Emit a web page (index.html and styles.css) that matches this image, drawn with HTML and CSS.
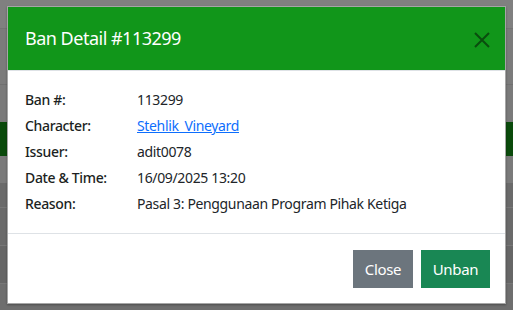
FILE: index.html
```html
<!DOCTYPE html>
<html lang="id">
<head>
<meta charset="utf-8">
<title>Ban Detail</title>
<link rel="stylesheet" href="styles.css">
</head>
<body>
<div class="page">
  <div class="bg bg-a"></div>
  <div class="bg bg-b"></div>
  <div class="bg bg-c"></div>
  <div class="bg bg-green"></div>
  <div class="bg bg-d"></div>
  <div class="bg bg-e"></div>
  <div class="bg bg-f"></div>
  <div class="bg bg-g"></div>
  <div class="bg bg-h"></div>
</div>
<div class="overlay">
  <div class="modal">
    <div class="modal-header">
      <h5 class="modal-title">Ban Detail #113299</h5>
      <button class="btn-close" type="button" aria-label="Close">
        <svg width="16" height="16" viewBox="0 0 16 16"><path d="M1 1L15 15M15 1L1 15" stroke="currentColor" stroke-width="2" fill="none"/></svg>
      </button>
    </div>
    <div class="modal-body">
      <div class="row"><span class="label">Ban #:</span><span class="value">113299</span></div>
      <div class="row"><span class="label">Character:</span><span class="value"><a href="#">Stehlik_Vineyard</a></span></div>
      <div class="row"><span class="label">Issuer:</span><span class="value">adit0078</span></div>
      <div class="row"><span class="label">Date &amp; Time:</span><span class="value">16/09/2025 13:20</span></div>
      <div class="row"><span class="label">Reason:</span><span class="value">Pasal 3: Penggunaan Program Pihak Ketiga</span></div>
    </div>
    <div class="modal-footer">
      <button class="btn btn-secondary" type="button">Close</button>
      <button class="btn btn-success" type="button">Unban</button>
    </div>
  </div>
</div>
</body>
</html>
```

FILE: styles.css
```css
html, body {
  margin: 0;
  padding: 0;
  height: 100%;
  overflow: hidden;
}
body {
  font-family: "Noto Sans", "Open Sans", sans-serif;
  color: #212529;
  background: #6c6c6c;
  position: relative;
}
.page {
  display: flex;
  flex-direction: column;
}
.bg { flex: none; }
.bg-a { height: 28px; background: #808080; border-bottom: 1px solid #747474; }
.bg-b { height: 55px; background: #7b7b7b; border-bottom: 1px solid #707070; }
.bg-c { height: 37px; background: #7a7a7a; }
.bg-green { height: 34px; background: #0a4a0b; }
.bg-d { height: 27px; background: #7a7a7a; }
.bg-e { height: 24px; background: #6a6a6a; border-bottom: 1px solid #777; }
.bg-f { height: 37px; background: #6a6a6a; border-bottom: 1px solid #777; }
.bg-g { height: 37px; background: #666; border-bottom: 1px solid #777; }
.bg-h { height: 30px; background: #6e6e6e; }

.overlay {
  position: absolute;
  inset: 0;
  padding-top: 6px;
}
.modal {
  width: 497px;
  margin-left: 7px;
  background: #fff;
  border: 1px solid rgba(0,0,0,.35);
  box-shadow: 0 1px 2px rgba(0,0,0,.3);
}
.modal-header {
  background: #11961a;
  height: 63px;
  padding: 0 15px 0 17px;
  display: flex;
  align-items: center;
  justify-content: space-between;
  border-bottom: 1px solid #dee2e6;
}
.modal-title {
  margin: 0;
  font-size: 18px;
  font-weight: 400;
  color: #fff;
  line-height: 30px;
  padding-bottom: 1px;
  letter-spacing: -0.5px;
}
.btn-close {
  border: 0;
  background: none;
  padding: 0;
  width: 16px;
  height: 16px;
  color: #0a4d0e;
  display: flex;
  margin-top: 2px;
}
.modal-body {
  padding: 16px 17px;
}
.row {
  display: flex;
  height: 26px;
  line-height: 26px;
  font-size: 14px;
  letter-spacing: -0.35px;
}
.label {
  width: 112px;
  font-weight: 500;
  color: #1c1f22;
}
.value { color: #212529; }
.value a { color: #0d6efd; text-decoration: underline; }
.modal-footer {
  border-top: 1px solid #dee2e6;
  padding: 16px 15px 15px;
  display: flex;
  justify-content: flex-end;
  gap: 8px;
}
.btn {
  border: 0;
  height: 38px;
  font-family: inherit;
  font-size: 15px;
  letter-spacing: -0.3px;
  color: #fff;
  padding: 0;
  border-radius: 0;
  cursor: pointer;
}
.btn-secondary { background: #6c757d; width: 60px; }
.btn-success { background: #198754; width: 69px; }
```
